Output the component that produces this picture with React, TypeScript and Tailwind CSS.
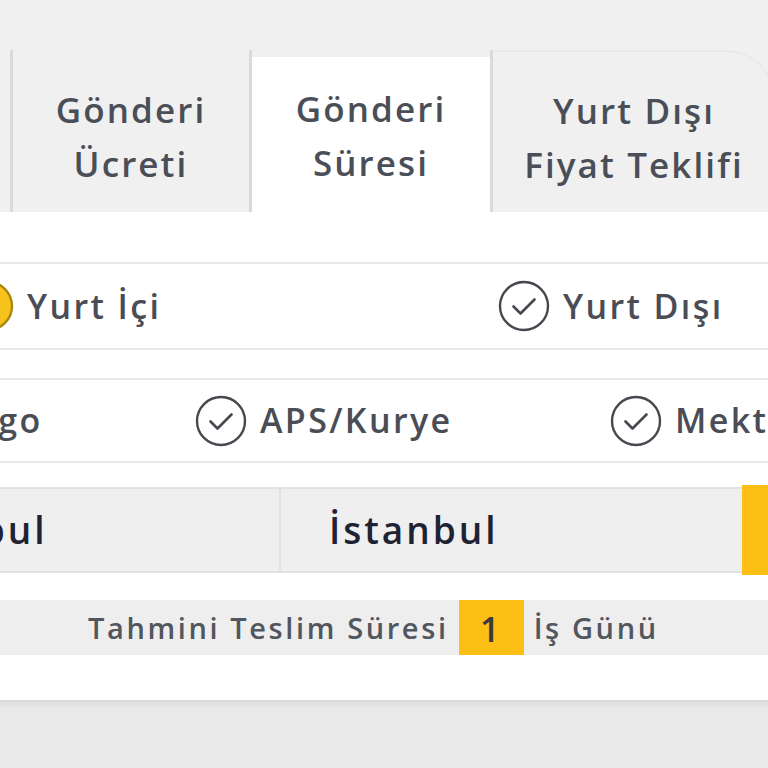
import React from "react";

function CheckCircle({ filled = false }: { filled?: boolean }) {
  return (
    <svg
      width="52"
      height="52"
      viewBox="0 0 52 52"
      className="shrink-0"
      fill="none"
    >
      <circle
        cx="26"
        cy="26"
        r="24"
        fill={filled ? "#f6c21b" : "none"}
        stroke={filled ? "#a8870f" : "#45484e"}
        strokeWidth="2.4"
      />
      <path
        d="M15.5 26.5 L22.5 33.5 L36.5 19.5"
        stroke={filled ? "#6b5608" : "#45484e"}
        strokeWidth="2.6"
        strokeLinecap="round"
        strokeLinejoin="round"
      />
    </svg>
  );
}

function Option({
  label,
  filled,
  className,
}: {
  label: string;
  filled?: boolean;
  className?: string;
}) {
  return (
    <div className={`flex shrink-0 items-center gap-[13px] ${className ?? ""}`}>
      <CheckCircle filled={filled} />
      <span className="whitespace-nowrap text-[34px] font-semibold tracking-[0.07em] text-[#4a4d55]">
        {label}
      </span>
    </div>
  );
}

function Tab({
  lines,
  active,
  className,
}: {
  lines: [string, string];
  active?: boolean;
  className?: string;
}) {
  return (
    <div
      className={`flex shrink-0 flex-col items-center justify-center text-[35px] font-semibold leading-[54px] tracking-[0.06em] text-[#4a4e57] ${
        active ? "mt-[7px] bg-white pt-[2px]" : "bg-[#f0f0f0] pt-[12px]"
      } ${className ?? ""}`}
    >
      <span className="whitespace-nowrap">{lines[0]}</span>
      <span className="whitespace-nowrap">{lines[1]}</span>
    </div>
  );
}

export default function App() {
  return (
    <div className="flex h-[768px] w-[768px] flex-col overflow-hidden bg-[#f0f0f0] font-['Open_Sans',sans-serif]">
      {/* Top page background */}
      <div className="h-[50px] shrink-0" />

      {/* Tabs */}
      <div className="flex h-[162px] shrink-0">
        <div className="w-[10px] shrink-0 bg-[#f0f0f0]" />
        <div className="w-[3px] shrink-0 bg-[#dadada]" />
        <Tab lines={["Gönderi", "Ücreti"]} className="w-[236px]" />
        <div className="w-[3px] shrink-0 bg-[#dadada]" />
        <Tab lines={["Gönderi", "Süresi"]} active className="w-[238px]" />
        <div className="w-[3px] shrink-0 bg-[#dadada]" />
        <Tab
          lines={["Yurt Dışı", "Fiyat Teklifi"]}
          className="w-[284px] rounded-tr-[52px] border-r-2 border-t-2 border-[#e9e9e9]"
        />
      </div>

      {/* Content */}
      <div className="flex h-[488px] shrink-0 flex-col bg-white">
        <div className="h-[50px] shrink-0" />

        {/* Domestic / abroad */}
        <div className="flex h-[88px] shrink-0 items-center border-y-2 border-[#e8e8e8]">
          <Option label="Yurt İçi" filled className="ml-[-38px] w-[536px]" />
          <Option label="Yurt Dışı" />
        </div>

        <div className="h-[28px] shrink-0" />

        {/* Shipment type */}
        <div className="flex h-[85px] shrink-0 items-center border-y-2 border-[#e8e8e8]">
          <Option label="Kargo" className="ml-[-130px] w-[325px]" />
          <Option label="APS/Kurye" className="w-[415px]" />
          <Option label="Mektup" />
        </div>

        <div className="h-[22px] shrink-0" />

        {/* Cities */}
        <div className="flex h-[90px] shrink-0 items-stretch">
          <div className="my-[2px] ml-[-175px] flex w-[456px] shrink-0 items-center border-y-2 border-r-2 border-[#e2e2e2] bg-[#efefef] pl-[53px]">
            <span className="text-[37px] font-semibold tracking-[0.08em] text-[#1f2233]">
              İstanbul
            </span>
          </div>
          <div className="my-[2px] flex w-[461px] shrink-0 items-center border-y-2 border-[#e2e2e2] bg-[#efefef] pl-[48px]">
            <span className="text-[37px] font-semibold tracking-[0.08em] text-[#1f2233]">
              İstanbul
            </span>
          </div>
          <div className="w-[60px] shrink-0 bg-[#fcbf14]" />
        </div>

        <div className="h-[25px] shrink-0" />

        {/* Estimated delivery */}
        <div className="flex h-[55px] shrink-0 items-stretch bg-[#eeeeee] pl-[88px] text-[29px] font-semibold tracking-[0.09em] text-[#52565e]">
          <span className="flex items-center whitespace-nowrap">
            Tahmini Teslim Süresi
          </span>
          <span className="mx-[10px] flex w-[65px] items-center justify-center bg-[#fcbf14] pt-[4px] text-[34px] text-[#3a3a3a]">
            1
          </span>
          <span className="flex items-center whitespace-nowrap">İş Günü</span>
        </div>

        <div className="flex-1" />
      </div>

      {/* Bottom page background */}
      <div className="h-[8px] shrink-0 bg-gradient-to-b from-[#d9d9d9] to-[#e9e9e9]" />
      <div className="flex-1 bg-[#e9e9e9]" />
    </div>
  );
}
